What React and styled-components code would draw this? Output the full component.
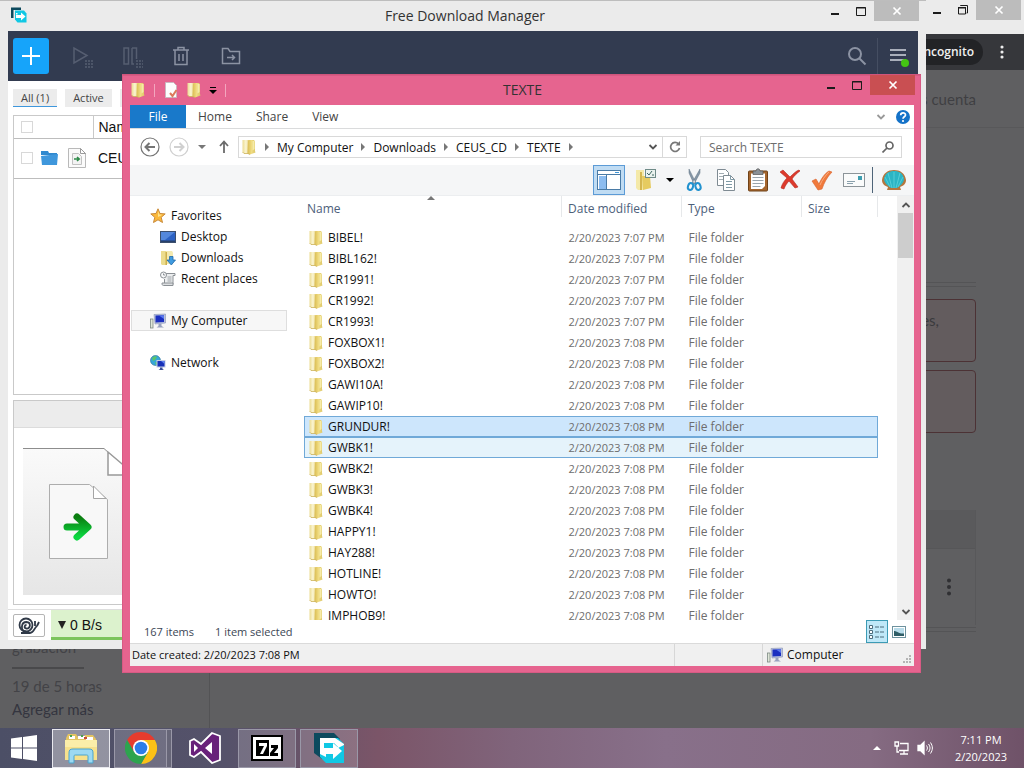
import React, { useState } from 'react';
import styled, { createGlobalStyle, css } from 'styled-components';

const GlobalStyle = createGlobalStyle`
  * {
    box-sizing: border-box;
  }

  body {
    margin: 0;
    overflow: hidden;
    font-family: "Open Sans", "Noto Sans", sans-serif;
    font-size: 12px;
    color: #111;
  }

  button,
  input {
    font: inherit;
    color: inherit;
    margin: 0;
    padding: 0;
    border: 0;
    background: none;
  }

  svg {
    display: block;
    flex: none;
  }
`;

const files = [
  ['BIBEL!', '2/20/2023 7:07 PM'],
  ['BIBL162!', '2/20/2023 7:07 PM'],
  ['CR1991!', '2/20/2023 7:07 PM'],
  ['CR1992!', '2/20/2023 7:07 PM'],
  ['CR1993!', '2/20/2023 7:07 PM'],
  ['FOXBOX1!', '2/20/2023 7:08 PM'],
  ['FOXBOX2!', '2/20/2023 7:08 PM'],
  ['GAWI10A!', '2/20/2023 7:08 PM'],
  ['GAWIP10!', '2/20/2023 7:08 PM'],
  ['GRUNDUR!', '2/20/2023 7:08 PM'],
  ['GWBK1!', '2/20/2023 7:08 PM'],
  ['GWBK2!', '2/20/2023 7:08 PM'],
  ['GWBK3!', '2/20/2023 7:08 PM'],
  ['GWBK4!', '2/20/2023 7:08 PM'],
  ['HAPPY1!', '2/20/2023 7:08 PM'],
  ['HAY288!', '2/20/2023 7:08 PM'],
  ['HOTLINE!', '2/20/2023 7:08 PM'],
  ['HOWTO!', '2/20/2023 7:08 PM'],
  ['IMPHOB9!', '2/20/2023 7:08 PM'],
];

/* ---------- icons ---------- */

const FolderIcon = () => (
  <svg width="16" height="16" viewBox="0 0 16 16">
    <defs>
      <linearGradient id="folderBack" x1="0" x2="1">
        <stop offset="0" stopColor="#ecdc92" />
        <stop offset=".5" stopColor="#fbf6d4" />
        <stop offset="1" stopColor="#dfc568" />
      </linearGradient>
      <linearGradient id="folderFront" x1="0" x2="1">
        <stop offset="0" stopColor="#d9bc52" />
        <stop offset=".5" stopColor="#f0dc82" />
        <stop offset="1" stopColor="#dcc668" />
      </linearGradient>
    </defs>
    <path d="M1.500 1h7v13.500H3L1.500 13z" fill="url(#folderBack)" />
    <path d="M7 2l1-1h5l1 1.500V12l.500 1.500L9 15.500 6.500 14.500z" fill="url(#folderFront)" />
    <path d="M11.500 2h2v8l-2 1.500z" fill="#f6eba8" />
    <path d="M1.500 13L3 14.500h4l2 1" fill="none" stroke="#cdb35a" strokeWidth=".8" />
  </svg>
);

const StarIcon = () => (
  <svg width="16" height="16" viewBox="0 0 16 16">
    <path d="M8 .8l2 4.7 5.2.4-4 3.4 1.3 5.2L8 11.8l-4.5 2.7 1.3-5.2-4-3.4L6 5.5z" fill="#fbb83a" stroke="#c98a3a" />
    <path d="M8 3l1.2 3.4 3.3.3L8 9z" fill="#ffe48c" />
  </svg>
);

const DesktopIcon = () => (
  <svg width="16" height="16" viewBox="0 0 16 16">
    <rect x=".5" y="2.500" width="15" height="11" fill="#2c62c4" stroke="#3c4f6e" />
    <path d="M1 3h14L5 11H1z" fill="#5488dc" />
    <path d="M1 11.500h14V13H1z" fill="#28406a" />
  </svg>
);

const DownloadsIcon = () => (
  <svg width="16" height="16" viewBox="0 0 16 16">
    <path d="M1 1h6v14H2l-1-1z" fill="#ecdc8d" />
    <path d="M6 1h6l1 1.500V14H7z" fill="#f4eab0" />
    <path d="M5.500 2v13H7V2z" fill="#cdb04c" />
    <path d="M9.500 6.500h3.500V10h2.500l-4.200 5L7 10h2.500z" fill="#3f9be0" stroke="#1f68a8" strokeWidth=".8" />
  </svg>
);

const RecentIcon = () => (
  <svg width="16" height="16" viewBox="0 0 16 16" fill="none" stroke="#8b9095">
    <path d="M6 2.500h9v2h-2v9H4.500V8" fill="#eceeef" />
    <path d="M2 12h11v2.500H3.500C2 14.500 2 13 2 12z" fill="#dcdfe1" />
    <path d="M7.500 6h4M7.500 8h4M7.500 10h4" stroke="#9da3a8" />
    <circle cx="3.500" cy="4" r="3" fill="#f7f8f9" />
    <path d="M3.500 2.500V4H5" />
  </svg>
);

const ComputerIcon = () => (
  <svg width="16" height="16" viewBox="0 0 16 16">
    <rect x=".5" y="6" width="2.500" height="9" fill="#dfe6d8" stroke="#7d8a84" strokeWidth=".8" />
    <path d="M4 1.500l11.500-.5v9L5 11z" fill="#b8c2dd" stroke="#8892b5" strokeWidth=".6" />
    <path d="M5.500 2.500l8.500-.300v6.800l-8.500.5z" fill="#1b2fc0" />
    <path d="M9 2.400l5-.2V6z" fill="#5a78ee" />
    <path d="M8.500 11h3v2l2.500 1.500H6.500L8.500 13z" fill="#98a2be" />
  </svg>
);

const NetworkIcon = () => (
  <svg width="16" height="16" viewBox="0 0 16 16">
    <circle cx="5.500" cy="5.500" r="5" fill="#36a8d8" stroke="#2a6c94" strokeWidth=".6" />
    <path d="M2 3c2-2 4-2 5-1L5 5 3 6zM5 7l3 1-2 2.300z" fill="#5cc46a" />
    <path d="M6.500 5h9v7.500h-9z" fill="#c3cce4" />
    <path d="M7.500 6h7v5.500h-7z" fill="#1730b8" />
    <path d="M11 6h3.500v3z" fill="#5f82f0" />
    <path d="M10 12.500h2.500V14l1.500 1H8.500l1.500-1z" fill="#3c4f98" />
  </svg>
);

const FdmLogo = ({ size = 16, square }) => (
  <svg width={size} height={size} viewBox="0 0 32 32">
    <path d={square ? 'M1 1h20l6 6-18 20-8-6z' : 'M0 1h20v5H5v16H0z'} fill="#0d4a5e" />
    <path d={square ? 'M7 6h18l6 6v19H13l-6-6z' : 'M8 7h18l5 6v18H13l-5-6z'} fill="#10c8e4" />
    <path d={square ? 'M7 6h15l9 6v1l-6 3H13v9l-6-3z' : 'M10 12h3v3h-3z'} fill="#fff" />
    {square && <path d="M11 11h10l4 4-4 1H11z" fill="#10c8e4" />}
    <path d="M10 16h10v-5l9 8-9 8v-5H10z" fill="#fff" />
  </svg>
);

const PageIcon = ({ size = 22 }) => (
  <svg width={size} height={size} viewBox="0 0 22 22">
    <path d="M2.500 1.500h12l5 5v14h-17z" fill="#fbfbfb" stroke="#b9b9b9" />
    <path d="M14.500 1.500v5h5z" fill="#fff" stroke="#9a9a9a" />
    <path d="M6.500 6.500h6l3 3v8h-9z" fill="#f3f3f3" stroke="#c2c2c2" />
    <path d="M8 12h5M11 10l2.200 2-2.200 2" fill="none" stroke="#2d8a48" strokeWidth="1.600" />
  </svg>
);

const PaneIcon = () => (
  <svg width="26" height="24" viewBox="0 0 26 24">
    <rect x="1.500" y="2.500" width="23" height="19" fill="#fff" stroke="#4a7ba6" />
    <path d="M2 6.500h22" stroke="#4a7ba6" />
    <path d="M3 8h7v13H3z" fill="#8dbdf0" />
    <path d="M10.500 7v15" stroke="#4a7ba6" />
    <path d="M19 4.500h4" stroke="#3f97d8" />
  </svg>
);

const FolderOptionsIcon = () => (
  <svg width="24" height="24" viewBox="0 0 24 24">
    <path d="M2 2h8v20H4l-2-2z" fill="#f4e9a8" />
    <path d="M8 8h8l1 12-8 2z" fill="#e6cb60" />
    <path d="M6 4h2v18H6z" fill="#d4b650" />
    <rect x="11.500" y="1.500" width="10" height="8" fill="#eaf2ee" stroke="#6f8b88" />
    <path d="M13 5l2 2 3-4" fill="none" stroke="#3c6660" />
    <path d="M18 7h2" stroke="#3c6660" />
  </svg>
);

const CutIcon = () => (
  <svg width="24" height="24" viewBox="0 0 24 24">
    <path d="M7 1l7 14-2 1L7 5zM18 1l-8 14 2 1 6-11z" fill="#8798a8" stroke="#5e7080" strokeWidth=".5" />
    <ellipse cx="8.500" cy="18.500" rx="2.500" ry="3.500" fill="none" stroke="#2292cf" strokeWidth="2" transform="rotate(20 8.500 18.500)" />
    <ellipse cx="16" cy="18.500" rx="2.500" ry="3.500" fill="none" stroke="#2292cf" strokeWidth="2" transform="rotate(-20 16 18.500)" />
  </svg>
);

const CopyIcon = () => (
  <svg width="24" height="24" viewBox="0 0 24 24" fill="#fff" stroke="#7f8b93">
    <path d="M3.500 1.500h8l3 3v13h-11z" />
    <path d="M5 5.500h5M5 8.500h5M5 11.500h5" stroke="#a3adb3" />
    <path d="M9.500 7.500h7l4 4v11h-11z" />
    <path d="M16.500 7.500v4h4M12 13.500h6M12 16.500h6M12 19.500h6" stroke="#7f9aa6" fill="none" />
  </svg>
);

const PasteIcon = () => (
  <svg width="24" height="24" viewBox="0 0 24 24">
    <rect x="2.500" y="3" width="19" height="20" rx="1" fill="#a5662e" stroke="#6f4218" />
    <path d="M5 5.500h14V18l-3 3H5z" fill="#fff" />
    <path d="M6.500 9.500h11M6.500 12.500h11M6.500 15.500h11M6.500 18.500h8" stroke="#9aa5ad" />
    <path d="M7 3h3c0-3 4-3 4 0h3v3.500H7z" fill="#8b9196" stroke="#555" strokeWidth=".7" />
  </svg>
);

const DeleteIcon = () => (
  <svg width="24" height="24" viewBox="0 0 24 24" fill="#dd3a2c" stroke="#b22a20" strokeWidth=".6">
    <path d="M2 4l3-2 7 7c3-3 6-6 9-7l1 1c-3 2-6 5-8 8l6 8-3 1-6-7c-2 2-4 5-5 8l-3-1c1-4 3-7 6-10z" />
  </svg>
);

const CheckIcon = () => (
  <svg width="24" height="24" viewBox="0 0 24 24">
    <path d="M2 13l4-2 3 5c2-5 6-11 10-13l3 1c-5 5-8 11-10 17l-4 1z" fill="#f07a3c" stroke="#d9622c" strokeWidth=".6" />
    <path d="M10 17c2-5 5-9 9-13" stroke="#f9ab7e" fill="none" />
  </svg>
);

const MailIcon = () => (
  <svg width="24" height="24" viewBox="0 0 24 24">
    <rect x="1.500" y="5.500" width="21" height="13" fill="#fafbfb" stroke="#8c9499" />
    <path d="M5 13.500h8M5 15.500h6" stroke="#8aa0ac" />
    <rect x="16" y="8" width="4" height="4" fill="#3c9eb0" />
  </svg>
);

const ShellIcon = () => (
  <svg width="26" height="24" viewBox="0 0 26 24">
    <path d="M1 12C2 5 7 2 13 2s11 3 12 10c0 4-3 6-6 7l1 3H6l1-3c-3-1-6-3-6-7z" fill="#b5763d" />
    <path d="M3 11C4 5 8 3 13 3s9 2 10 8c0 4-4 7-7 9h-6c-3-2-7-5-7-9z" fill="#2bb5c4" />
    <path d="M13 20V4M11 20L7 5M15 20l4-15M9 19L4 9M17 19l5-10" stroke="#5fd3dc" strokeWidth=".8" fill="none" />
  </svg>
);

const HelpIcon = () => (
  <svg width="14" height="14" viewBox="0 0 14 14">
    <circle cx="7" cy="7" r="7" fill="#1472c8" />
    <path d="M4.700 5.200c0-3.200 4.800-3 4.800-.3C9.500 6.700 7 6.800 7 8.700" fill="none" stroke="#fff" strokeWidth="1.700" />
    <circle cx="7" cy="11" r="1.100" fill="#fff" />
  </svg>
);

const ChevronDown = ({ color = '#555', size = 10, up }) => (
  <svg width={size} height={size} viewBox="0 0 10 10">
    <path d={up ? 'M1.500 7L5 3.500 8.500 7' : 'M1.500 3L5 6.500 8.500 3'} fill="none" stroke={color} strokeWidth="1.800" />
  </svg>
);

const Caret = ({ d = 'M0 2h8L4 6z', color = '#000' }) => (
  <svg width="8" height="8" viewBox="0 0 8 8">
    <path d={d} fill={color} />
  </svg>
);

const ArrowCircle = ({ right, color }) => (
  <svg width="20" height="20" viewBox="0 0 20 20" fill="none" stroke={color}>
    <circle cx="10" cy="10" r="9" strokeWidth="1.200" />
    <path d={right ? 'M5 10h9M10.500 6l4 4-4 4' : 'M15 10H6M9.500 6l-4 4 4 4'} strokeWidth="2" />
  </svg>
);

const PropertiesIcon = () => (
  <svg width="16" height="16" viewBox="0 0 16 16">
    <path d="M2.500.5h8l3 3v12h-11z" fill="#fdfdfd" stroke="#c9b9c0" />
    <path d="M7 11l2.500 3L13.500 8" fill="none" stroke="#dd7a5c" strokeWidth="2" />
  </svg>
);

/* ---------- shared window parts ---------- */

const Desktop = styled.div`
  position: relative;
  display: flex;
  flex-direction: column;
  height: 100vh;
  overflow: hidden;
  background: #5f5f61;
`;

const WindowControls = styled.div`
  display: flex;
  justify-content: flex-end;
  height: 20px;
`;

const ControlButton = styled.button`
  display: flex;
  align-items: center;
  justify-content: center;
  width: ${({ $close }) => ($close ? '45px' : '26px')};
  height: 20px;
  color: ${({ $close }) => ($close ? '#fff' : '#1b1b1b')};
  background: ${({ $close }) => $close || 'transparent'};
`;

const Controls = ({ closeColor, restore }) => (
  <WindowControls>
    <ControlButton aria-label="Minimize">
      <svg width="12" height="12" viewBox="0 0 12 12"><path d="M2 8h8v2H2z" fill="currentColor" /></svg>
    </ControlButton>
    <ControlButton aria-label="Maximize">
      <svg width="12" height="12" viewBox="0 0 12 12" fill="none" stroke="currentColor">
        {restore ? <path d="M1.500 4h7v6h-7zM1 3.500h8M3.500 2V1.500h7V9H9.500" /> : <path d="M1.500 3v7.500h9V2.500h-9zM1 3h10" />}
      </svg>
    </ControlButton>
    <ControlButton aria-label="Close" $close={closeColor}>
      <svg width="10" height="10" viewBox="0 0 10 10"><path d="M1.500 1.500l7 7M8.500 1.500l-7 7" stroke="currentColor" strokeWidth="1.700" /></svg>
    </ControlButton>
  </WindowControls>
);

const TitleBar = styled.header`
  display: grid;
  grid-template-columns: 1fr auto 1fr;
  flex: none;
  height: 31px;
`;

const Title = styled.h1`
  margin: 0;
  align-self: center;
  font-size: 14px;
  font-weight: 400;
  line-height: 20px;
  color: #333;
`;

/* ---------- browser in the back ---------- */

const Browser = styled.section`
  display: flex;
  flex: 1;
  flex-direction: column;
  min-height: 0;
`;

const BrowserTop = styled.div`
  display: flex;
  justify-content: flex-end;
  height: 34px;
  padding-right: 3px;
  background: #ebebeb;
`;

const BrowserToolbar = styled.div`
  display: flex;
  align-items: center;
  justify-content: flex-end;
  gap: 16px;
  height: 36px;
  padding-right: 19px;
  background: #36373b;
`;

const Pill = styled.span`
  padding: 0 9px 0 40px;
  border-radius: 13px;
  line-height: 26px;
  font-weight: 600;
  color: #f1f1f1;
  background: #222326;
`;

const PageHeader = styled.div`
  flex: none;
  height: 58px;
  padding-right: 48px;
  border-bottom: 1px solid #58585a;
  font: 15px/58px Lato, sans-serif;
  color: #3f3f43;
  text-align: right;
`;

const PageBody = styled.div`
  display: flex;
  flex: 1;
  min-height: 0;
`;

const PageSide = styled.aside`
  display: flex;
  flex-direction: column;
  justify-content: flex-end;
  width: 210px;
  padding: 0 12px 7px;
  border-right: 1px solid #535355;
  font: 15px/23px Lato, sans-serif;
  color: #434347;
`;

const Meter = styled.div`
  width: 72px;
  height: 2px;
  margin: 8px 0 6px;
  background: #49494b;
`;

const PageLink = styled.a`
  color: #34353f;
  text-decoration: none;
`;

const PageMain = styled.main`
  display: flex;
  flex: 1;
  flex-direction: column;
  padding: 154px 48px 0 20px;
`;

const Rules = styled.div`
  flex: none;
  height: 5px;
  border: solid #545456;
  border-width: 1px 0;
`;

const Alert = styled.div`
  flex: none;
  height: 63px;
  margin-top: ${({ $first }) => ($first ? '12px' : '8px')};
  padding: 8px 36px;
  border: 1px solid #4c3235;
  border-radius: 4px;
  font: 15px/24px Lato, sans-serif;
  color: #3a3a3d;
  text-align: right;
  background: #635c5e;
`;

const PageTable = styled.div`
  flex: none;
  height: 115px;
  margin: 77px 0 2px;
  padding-top: 38px;
  border-right: 1px solid #58585a;
  background: linear-gradient(#5a5a5c 38px, #5f5f61 38px);
`;

const PageRow = styled.div`
  display: flex;
  align-items: center;
  justify-content: flex-end;
  height: 77px;
  padding-right: 23px;
  border-top: 1px solid #565658;
`;

const Dots = ({ color, size }) => (
  <svg width="6" height={size} viewBox="0 0 6 18" fill={color}>
    <circle cx="3" cy="2.500" r="2" />
    <circle cx="3" cy="9" r="2" />
    <circle cx="3" cy="15.500" r="2" />
  </svg>
);

const BrowserWindow = () => (
  <Browser>
    <BrowserTop><Controls closeColor="#bcbcbc" restore /></BrowserTop>
    <BrowserToolbar>
      <Pill>Incognito</Pill>
      <Dots color="#eee" size={14} />
    </BrowserToolbar>
    <PageHeader>Tus cuenta</PageHeader>
    <PageBody>
      <PageSide>
        <span>grabación</span>
        <Meter />
        <span>19 de 5 horas</span>
        <PageLink href="#more">Agregar más</PageLink>
      </PageSide>
      <PageMain>
        <Rules />
        <Alert $first>es,</Alert>
        <Alert />
        <PageTable>
          <PageRow><Dots color="#303033" size={18} /></PageRow>
        </PageTable>
        <Rules />
      </PageMain>
    </PageBody>
  </Browser>
);

/* ---------- download manager ---------- */

const Fdm = styled.section`
  position: absolute;
  inset: 0 98px 119px 0;
  display: flex;
  flex-direction: column;
  padding: 0 8px 9px;
  border-top: 1px solid #bdbdbd;
  background: #ebebeb;
`;

const FdmTitle = styled(TitleBar)`
  height: 30px;
  padding-left: 3px;
  margin-right: -1px;
`;

const LogoSlot = styled.span`
  padding-top: 6px;
`;

const FdmToolbar = styled.div`
  display: flex;
  align-items: center;
  flex: none;
  gap: 14px;
  height: 50px;
  padding-left: 5px;
  color: #8c93a3;
  background: #323b50;
`;

const ToolButton = styled.button`
  display: flex;
  align-items: center;
  justify-content: center;
  width: 36px;
  height: 36px;
  opacity: ${({ $dim }) => ($dim ? 0.4 : 1)};
  ${({ $primary }) => $primary && css`
    border-radius: 3px;
    color: #fff;
    background: #16a4fa;
  `}
`;

const MenuSide = styled.div`
  display: flex;
  gap: 2px;
  margin-left: auto;
`;

const MenuButton = styled(ToolButton)`
  width: 41px;
  border-left: 1px solid #454e62;
`;

const FdmBody = styled.div`
  display: flex;
  flex: 1;
  flex-direction: column;
  min-height: 0;
  background: #fff;
`;

const Filters = styled.div`
  display: flex;
  flex: none;
  gap: 8px;
  padding: 8px 5px;
`;

const Filter = styled.button`
  height: 18px;
  padding: 0 8px;
  font-size: 11px;
  line-height: 17px;
  color: #444;
  background: #ececec;
  border-bottom: 1px solid ${({ $active }) => ($active ? '#3f97dc' : '#ececec')};
`;

const Downloads = styled.div`
  flex: 1;
  margin: 0 5px;
  border: 1px solid #c9c9c9;
`;

const DownloadTable = styled.table`
  width: 100%;
  border-collapse: collapse;
  table-layout: fixed;
  font: 14px "Liberation Sans", Arial, sans-serif;

  th,
  td {
    padding: 0 0 0 5px;
    border-bottom: 1px solid #bdbdbd;
    font-weight: 400;
    text-align: left;
  }

  th {
    height: 22px;
  }

  th + th {
    border-left: 1px solid #c9c9c9;
  }

  td {
    height: 40px;
  }
`;

const CheckCol = styled.col`
  width: 79px;
`;

const CellIcons = styled.div`
  display: flex;
  align-items: center;
  gap: 8px;
  padding-left: 2px;
`;

const Tick = styled.input`
  appearance: none;
  display: block;
  width: 12px;
  height: 12px;
  border: 1px solid #d8d8d8;
  background: #fff;
`;

const Details = styled.div`
  flex: none;
  height: 205px;
  margin: 5px 5px 4px;
  border: 1px solid #c9c9c9;
`;

const DetailsHead = styled.div`
  height: 27px;
  border-bottom: 1px solid #dcdcdc;
  background: #ececec;
`;

const Preview = styled.div`
  padding: 20px 9px;
`;

const FdmStatus = styled.div`
  display: flex;
  flex: none;
  height: 31px;
  border-top: 1px solid #dedede;
`;

const SnailButton = styled.button`
  display: flex;
  align-items: center;
  justify-content: center;
  width: 32px;
  height: 23px;
  margin: 4px 6px 0 5px;
  border: 1px solid #b5b5b5;
  border-radius: 2px;
`;

const Speed = styled.div`
  display: flex;
  align-items: center;
  gap: 4px;
  width: 120px;
  padding: 3px 0 0 7px;
  border-bottom: 3px solid #7cc45c;
  font: 14px "Liberation Sans", Arial, sans-serif;
  background: #dcf2cd;
`;

const DownloadManager = () => (
  <Fdm>
    <FdmTitle>
      <LogoSlot><FdmLogo /></LogoSlot>
      <Title>Free Download Manager</Title>
      <Controls closeColor="#bcbcbc" />
    </FdmTitle>
    <FdmToolbar>
      <ToolButton $primary aria-label="Add download">
        <svg width="20" height="20" viewBox="0 0 20 20"><path d="M10 1v18M1 10h18" stroke="currentColor" strokeWidth="2" /></svg>
      </ToolButton>
      <ToolButton $dim aria-label="Start">
        <svg width="24" height="24" viewBox="0 0 24 24" fill="none" stroke="currentColor" strokeWidth="1.500">
          <path d="M5 4v15l13-7.500z" />
          <path d="M16 17h8M16 20h8M16 23h8" strokeDasharray="2 1" />
        </svg>
      </ToolButton>
      <ToolButton $dim aria-label="Pause">
        <svg width="24" height="24" viewBox="0 0 24 24" fill="none" stroke="currentColor" strokeWidth="1.500">
          <path d="M5 4h4.500v16H5zM13 4h4.500v11M13 4v16h2" />
          <path d="M17 17h7M17 20h7M17 23h7" strokeDasharray="2 1" />
        </svg>
      </ToolButton>
      <ToolButton aria-label="Delete">
        <svg width="20" height="20" viewBox="0 0 20 20" fill="none" stroke="currentColor" strokeWidth="1.500">
          <path d="M2 4h16M7 4V1.500h6V4M4 4v14.500h12V4M8 8v7M12 8v7" />
        </svg>
      </ToolButton>
      <ToolButton aria-label="Move">
        <svg width="20" height="20" viewBox="0 0 20 20" fill="none" stroke="currentColor" strokeWidth="1.500">
          <path d="M1.500 17.500v-15H7l2 3h9.500v12zM6 11.500h7M11 9l2.500 2.500L11 14" />
        </svg>
      </ToolButton>
      <MenuSide>
        <ToolButton aria-label="Search">
          <svg width="20" height="20" viewBox="0 0 20 20" fill="none" stroke="currentColor" strokeWidth="2">
            <circle cx="8" cy="8" r="6" />
            <path d="M12.500 12.500l6 6" />
          </svg>
        </ToolButton>
        <MenuButton aria-label="Menu">
          <svg width="22" height="22" viewBox="0 0 22 22">
            <path d="M3 5h16M3 10h16M3 15h16" stroke="#a9afbb" strokeWidth="2" />
            <circle cx="18" cy="18" r="4" fill="#44c413" />
          </svg>
        </MenuButton>
      </MenuSide>
    </FdmToolbar>
    <FdmBody>
      <Filters>
        <Filter $active>All (1)</Filter>
        <Filter>Active</Filter>
        <Filter>Completed</Filter>
      </Filters>
      <Downloads>
        <DownloadTable>
          <colgroup><CheckCol /><col /></colgroup>
          <thead>
            <tr>
              <th><CellIcons><Tick type="checkbox" aria-label="Select all" /></CellIcons></th>
              <th>Name</th>
            </tr>
          </thead>
          <tbody>
            <tr>
              <td>
                <CellIcons>
                  <Tick type="checkbox" aria-label="Select CEUS_CD" />
                  <svg width="17" height="16" viewBox="0 0 17 16">
                    <path d="M0 1h7l1 2h8v2H0z" fill="#3089cf" />
                    <path d="M0 6l17-2-1 11H1z" fill="#3f97dc" />
                  </svg>
                  <PageIcon />
                </CellIcons>
              </td>
              <td>CEUS_CD</td>
            </tr>
          </tbody>
        </DownloadTable>
      </Downloads>
      <Details>
        <DetailsHead />
        <Preview>
          <svg width="116" height="147" viewBox="0 0 116 147">
            <defs>
              <linearGradient id="paper" x1="0" y1="0" x2="0" y2="1">
                <stop offset="0" stopColor="#fafafa" />
                <stop offset="1" stopColor="#e6e6e6" />
              </linearGradient>
              <linearGradient id="arrow" x1="0" y1="0" x2="0" y2="1">
                <stop offset="0" stopColor="#0b7d10" />
                <stop offset="1" stopColor="#0bd840" />
              </linearGradient>
            </defs>
            <path d="M0 .5h81l35 32V147H0z" fill="url(#paper)" />
            <path d="M0 .5h81l35 32" fill="none" stroke="#8d8d8d" />
            <path d="M85 4v23h27z" fill="#fff" stroke="#999" strokeWidth="1.500" />
            <path d="M26.500 36.500h40l18 15v59h-58z" fill="#f8f8f8" stroke="#adadad" />
            <path d="M70.500 38v12.500H83z" fill="#fff" stroke="#a5a5a5" />
            <path d="M44 79h20M54 69l11 10-11 10" fill="none" stroke="url(#arrow)" strokeWidth="7" strokeLinecap="round" strokeLinejoin="round" />
          </svg>
        </Preview>
      </Details>
      <FdmStatus>
        <SnailButton aria-label="Snail mode">
          <svg width="22" height="18" viewBox="0 0 22 18" fill="none" stroke="#2f3947" strokeWidth="1.800">
            <circle cx="8" cy="8" r="6.500" />
            <path d="M8 14.500C2 14 3 5 8.500 5c5 .5 4 7 0 6.500-3-.5-2-3.500 0-3.500" />
            <path d="M3 16h9c4 0 4-5 7-7M17 9V4M19 9l2-4" />
          </svg>
        </SnailButton>
        <Speed>
          <Caret d="M0 0h8L4 8z" color="#222" />
          0 B/s
        </Speed>
      </FdmStatus>
    </FdmBody>
  </Fdm>
);

/* ---------- explorer ---------- */

const ExplorerFrame = styled.section`
  position: absolute;
  inset: 74px 103px 95px 122px;
  display: flex;
  flex-direction: column;
  padding: 0 7px 7px 8px;
  border: solid #cf557c;
  border-width: 1px 0 0;
  background: #e6648f;
  box-shadow: inset 0 0 0 1px #d85a84;
`;

const ExplorerTitle = styled(TitleBar)`
  height: 30px;
  margin-right: -1px;
`;

const QuickAccess = styled.div`
  display: flex;
  align-items: center;
  gap: 7px;
`;

const QuickLine = styled.span`
  width: 1px;
  height: 13px;
  margin: 0 1px;
  background: #f3a6be;
`;

const Inner = styled.div`
  display: flex;
  flex: 1;
  flex-direction: column;
  min-height: 0;
  background: #fff;
`;

const Ribbon = styled.nav`
  display: flex;
  align-items: center;
  flex: none;
  height: 24px;
  border-bottom: 1px solid #dadbdc;
`;

const RibbonTab = styled.button`
  height: 23px;
  padding: 0 12px;
  line-height: 23px;
  color: ${({ $file }) => ($file ? '#fff' : '#444')};
  background: ${({ $file }) => ($file ? '#1979ca' : 'none')};
  ${({ $file }) => $file && 'width: 56px;'}
`;

const RibbonEnd = styled.div`
  display: flex;
  align-items: center;
  gap: 10px;
  margin-left: auto;
  padding-right: 4px;
`;

const IconButton = styled.button`
  display: flex;
  align-items: center;
  justify-content: center;
`;

const NavRow = styled.div`
  display: flex;
  align-items: center;
  flex: none;
  gap: 9px;
  height: 36px;
  padding: 0 12px 0 10px;
`;

const Address = styled.div`
  display: flex;
  align-items: center;
  flex: 1;
  gap: 6px;
  height: 22px;
  margin-left: -4px;
  padding-left: 2px;
  border: 1px solid #d9d9d9;
`;

const Refresh = styled(IconButton)`
  width: 24px;
  height: 20px;
  border-left: 1px solid #d9d9d9;
`;

const AddressEnd = styled.div`
  display: flex;
  align-items: center;
  gap: 4px;
  margin-left: auto;
`;

const SearchBox = styled.label`
  display: flex;
  align-items: center;
  width: 202px;
  height: 22px;
  margin-left: 4px;
  padding: 0 7px 0 8px;
  border: 1px solid #d9d9d9;
`;

const SearchInput = styled.input`
  flex: 1;
  min-width: 0;
  outline: 0;

  &::placeholder {
    color: #6d6d6d;
    opacity: 1;
  }
`;

const Commands = styled.div`
  display: flex;
  align-items: flex-end;
  justify-content: flex-end;
  flex: none;
  height: 31px;
  padding-right: 4px;
  background: #f5f6f7;
  border-bottom: 1px solid #eceef0;
`;

const Command = styled(IconButton)`
  width: ${({ $narrow }) => ($narrow ? '16px' : '32px')};
  height: 30px;
  ${({ $pressed }) => $pressed && css`
    margin-right: 5px;
    border: 1px solid #5c9bd6;
    background: #c0dcf3;
  `}
`;

const CommandLine = styled.span`
  width: 1px;
  height: 26px;
  margin: 2px 5px 2px 2px;
  background: #4e6478;
`;

const Content = styled.div`
  display: flex;
  flex: 1;
  min-height: 0;
`;

const Tree = styled.nav`
  display: flex;
  flex-direction: column;
  flex: none;
  width: 174px;
  padding: 9px 17px 0 1px;
`;

const TreeItem = styled.a`
  display: flex;
  align-items: center;
  gap: 5px;
  height: 21px;
  margin-bottom: ${({ $last }) => ($last ? '21px' : '0')};
  padding-left: ${({ $child }) => ($child ? '28px' : '18px')};
  border: 1px solid ${({ $selected }) => ($selected ? '#dedede' : 'transparent')};
  color: #111;
  text-decoration: none;
  background: ${({ $selected }) => ($selected ? '#f7f7f7' : 'none')};
`;

const ListPane = styled.div`
  flex: 1;
  min-width: 0;
  padding-right: 19px;
  overflow: hidden;
`;

const FileTable = styled.table`
  width: 100%;
  border-collapse: collapse;
  table-layout: fixed;
  color: #6d6d6d;
`;

const Col = styled.col`
  width: ${({ $width }) => $width || 'auto'};
`;

const HeadCell = styled.th`
  height: 21px;
  padding: 5px 0 0 ${({ $first }) => ($first ? '3px' : '6px')};
  border-right: 1px solid #e6e8ea;
  font-weight: 400;
  line-height: 16px;
  color: #4c607a;
  text-align: left;
`;

const SortMark = styled.span`
  float: right;
  margin: -7px 126px 0 0;
`;

const Spacer = styled.tr`
  height: 10px;
`;

const FileRow = styled.tr`
  height: 21px;
  background: ${({ $state }) => ({ selected: '#cde6fc', hover: '#e5f3fb' })[$state] || 'none'};
  outline: ${({ $state }) => ($state ? '1px solid #70a9d8' : 'none')};
  outline-offset: -1px;

  td {
    padding: 0 0 0 7px;
    line-height: 16px;
    white-space: nowrap;
  }

  td:first-child {
    padding-left: 4px;
  }
`;

const DateCell = styled.td`
  font-size: 11px;
`;

const FileName = styled.div`
  display: flex;
  align-items: center;
  gap: 4px;
  color: #111;
`;

const ScrollBar = styled.div`
  display: flex;
  flex-direction: column;
  flex: none;
  width: 17px;
  background: #f0f0f0;
`;

const ScrollButton = styled(IconButton)`
  height: 17px;
`;

const Thumb = styled.div`
  height: 45px;
  margin: 0 1px;
  background: #cdcdcd;
`;

const Track = styled.div`
  flex: 1;
`;

const Summary = styled.div`
  display: flex;
  align-items: center;
  flex: none;
  gap: 21px;
  height: 23px;
  padding: 0 4px 0 14px;
  font-size: 11px;
  color: #3c4654;
`;

const Views = styled.div`
  display: flex;
  align-items: center;
  margin-left: auto;
`;

const ViewButton = styled(IconButton)`
  width: 22px;
  height: 23px;
  border: 1px solid ${({ $on }) => ($on ? '#3c9bb5' : 'transparent')};
  background: ${({ $on }) => ($on ? '#bfe8f8' : 'none')};
`;

const StatusBar = styled.footer`
  display: flex;
  flex: none;
  height: 23px;
  border-top: 1px solid #dadada;
  line-height: 22px;
  background: #f0f0f0;
`;

const StatusCell = styled.div`
  display: flex;
  align-items: center;
  gap: 4px;
  flex: ${({ $width }) => ($width ? `0 0 ${$width}` : '1')};
  padding-left: ${({ $zone }) => ($zone ? '4px' : '1px')};
  border-left: 1px solid ${({ $width }) => ($width ? '#d7d7d7' : 'transparent')};
  font-size: ${({ $zone }) => ($zone ? '12px' : '11px')};
`;

const Grip = styled.span`
  align-self: flex-end;
  margin: 0 2px 2px auto;
`;

const commands = [
  ['Cut', CutIcon],
  ['Copy', CopyIcon],
  ['Paste', PasteIcon],
  ['Delete', DeleteIcon],
  ['Properties', CheckIcon],
  ['E-mail', MailIcon],
];

const places = [
  { label: 'Favorites', icon: StarIcon },
  { label: 'Desktop', icon: DesktopIcon, child: true },
  { label: 'Downloads', icon: DownloadsIcon, child: true },
  { label: 'Recent places', icon: RecentIcon, child: true, last: true },
  { label: 'My Computer', icon: ComputerIcon, last: true, selected: true },
  { label: 'Network', icon: NetworkIcon },
];

const Explorer = () => {
  const [selected, setSelected] = useState('GRUNDUR!');
  const [hovered, setHovered] = useState('GWBK1!');
  const rowState = (name) => {
    if (name === selected) return 'selected';
    return name === hovered ? 'hover' : '';
  };

  return (
    <ExplorerFrame>
      <ExplorerTitle>
        <QuickAccess>
          <FolderIcon />
          <QuickLine />
          <PropertiesIcon />
          <FolderIcon />
          <Caret d="M1 1h6v1H1zM0 4h8L4 8z" />
          <QuickLine />
        </QuickAccess>
        <Title>TEXTE</Title>
        <Controls closeColor="#c94f52" />
      </ExplorerTitle>
      <Inner>
        <Ribbon>
          <RibbonTab $file>File</RibbonTab>
          <RibbonTab>Home</RibbonTab>
          <RibbonTab>Share</RibbonTab>
          <RibbonTab>View</RibbonTab>
          <RibbonEnd>
            <IconButton aria-label="Expand the ribbon"><ChevronDown color="#999" /></IconButton>
            <IconButton aria-label="Help"><HelpIcon /></IconButton>
          </RibbonEnd>
        </Ribbon>
        <NavRow>
          <IconButton aria-label="Back"><ArrowCircle color="#757575" /></IconButton>
          <IconButton aria-label="Forward"><ArrowCircle right color="#d0d0d0" /></IconButton>
          <IconButton aria-label="Recent locations"><Caret color="#777" /></IconButton>
          <IconButton aria-label="Up">
            <svg width="18" height="14" viewBox="0 0 18 14"><path d="M9 13V2M5 6l4-4.500L13 6" fill="none" stroke="#6b6b6b" strokeWidth="1.800" /></svg>
          </IconButton>
          <Address>
            <FolderIcon />
            {['My Computer', 'Downloads', 'CEUS_CD', 'TEXTE'].map((crumb) => (
              <React.Fragment key={crumb}>
                <Caret d="M2 0l4 4-4 4z" color="#777" />
                <button>{crumb}</button>
              </React.Fragment>
            ))}
            <Caret d="M2 0l4 4-4 4z" color="#777" />
            <AddressEnd>
              <IconButton aria-label="Previous locations"><ChevronDown /></IconButton>
              <Refresh aria-label="Refresh">
                <svg width="12" height="12" viewBox="0 0 12 12">
                  <path d="M9.500 3A4.500 4.500 0 1 0 10.500 7" fill="none" stroke="#777" strokeWidth="1.700" />
                  <path d="M6.500 4.500h4.500V0z" fill="#777" />
                </svg>
              </Refresh>
            </AddressEnd>
          </Address>
          <SearchBox>
            <SearchInput placeholder="Search TEXTE" aria-label="Search TEXTE" />
            <svg width="12" height="12" viewBox="0 0 12 12" fill="none" stroke="#666" strokeWidth="1.700">
              <circle cx="7.500" cy="4.500" r="3.500" />
              <path d="M5 7l-4.500 4.500" />
            </svg>
          </SearchBox>
        </NavRow>
        <Commands>
          <Command $pressed aria-label="Navigation pane"><PaneIcon /></Command>
          <Command aria-label="Folder options"><FolderOptionsIcon /></Command>
          <Command $narrow aria-label="More options"><Caret /></Command>
          {commands.map(([label, Icon]) => (
            <Command key={label} aria-label={label}><Icon /></Command>
          ))}
          <CommandLine />
          <Command aria-label="Classic Shell"><ShellIcon /></Command>
        </Commands>
        <Content>
          <Tree>
            {places.map(({ label, icon: Icon, child, last, selected: on }) => (
              <TreeItem key={label} href="#place" $child={child} $last={last} $selected={on}>
                <Icon />
                {label}
              </TreeItem>
            ))}
          </Tree>
          <ListPane>
            <FileTable>
              <colgroup>
                <Col />
                <Col $width="120px" />
                <Col $width="120px" />
                <Col $width="76px" />
              </colgroup>
              <thead>
                <tr>
                  <HeadCell $first>
                    Name
                    <SortMark><Caret d="M0 6l4-4 4 4z" color="#777" /></SortMark>
                  </HeadCell>
                  <HeadCell>Date modified</HeadCell>
                  <HeadCell>Type</HeadCell>
                  <HeadCell>Size</HeadCell>
                </tr>
              </thead>
              <tbody>
                <Spacer><td colSpan="4" /></Spacer>
                {files.map(([name, date]) => (
                  <FileRow
                    key={name}
                    $state={rowState(name)}
                    onClick={() => setSelected(name)}
                    onMouseEnter={() => setHovered(name)}
                  >
                    <td><FileName><FolderIcon />{name}</FileName></td>
                    <DateCell>{date}</DateCell>
                    <td>File folder</td>
                    <td />
                  </FileRow>
                ))}
              </tbody>
            </FileTable>
          </ListPane>
          <ScrollBar>
            <ScrollButton aria-label="Scroll up"><ChevronDown up /></ScrollButton>
            <Thumb />
            <Track />
            <ScrollButton aria-label="Scroll down"><ChevronDown /></ScrollButton>
          </ScrollBar>
        </Content>
        <Summary>
          <span>167 items</span>
          <span>1 item selected</span>
          <Views>
            <ViewButton $on aria-label="Details view">
              <svg width="16" height="14" viewBox="0 0 16 14" fill="none" stroke="#4d6c7c">
                <path d="M.5.500h3v3h-3zM.5 5.500h3v3h-3zM.5 10.500h3v3h-3z" fill="#fff" />
                <path d="M6 2h4M11 2h4M6 7h4M11 7h4M6 12h4M11 12h4" />
              </svg>
            </ViewButton>
            <ViewButton aria-label="Large icons view">
              <svg width="14" height="12" viewBox="0 0 14 12">
                <rect x=".5" y=".5" width="13" height="11" fill="#fff" stroke="#6e929e" />
                <path d="M2 2h10v8H2z" fill="#b9dcea" />
                <path d="M2 5c3 0 5 3 10 2.500V10H2z" fill="#2f5d66" />
              </svg>
            </ViewButton>
          </Views>
        </Summary>
        <StatusBar>
          <StatusCell>Date created: 2/20/2023 7:08 PM</StatusCell>
          <StatusCell $width="88px" />
          <StatusCell $width="152px" $zone>
            <ComputerIcon />
            Computer
            <Grip>
              <svg width="9" height="9" viewBox="0 0 9 9" fill="#b4b4b4">
                <path d="M6 0h2v2H6zM3 3h2v2H3zM6 3h2v2H6zM0 6h2v2H0zM3 6h2v2H3zM6 6h2v2H6z" />
              </svg>
            </Grip>
          </StatusCell>
        </StatusBar>
      </Inner>
    </ExplorerFrame>
  );
};

/* ---------- taskbar ---------- */

const Bar = styled.footer`
  display: flex;
  align-items: center;
  flex: none;
  height: 40px;
  color: #fff;
  background: linear-gradient(90deg, #4c4f66 0%, #55526a 22%, #7b5568 37%, #80647b 50%, #88708a 65%, #856b82 85%, #6f5268 100%);
`;

const TaskButton = styled.button`
  display: flex;
  align-items: center;
  justify-content: center;
  width: 58px;
  height: 39px;
  margin-right: 4px;
  border: 1px solid transparent;
  ${({ $open }) => $open && css`
    border-color: #9a98a8;
    background: rgba(255, 255, 255, 0.17);
  `}
  ${({ $active }) => $active && css`
    border-color: #e8e8ee;
    background: rgba(255, 255, 255, 0.38);
  `}
  ${({ $stacked }) => $stacked && css`
    padding-right: 5px;
    box-shadow: inset -4px 0 0 #676678, inset -5px 0 0 #9a98a8;
  `}
`;

const StartButton = styled(TaskButton)`
  width: 48px;
`;

const Tray = styled.div`
  display: flex;
  align-items: center;
  gap: 12px;
  margin-left: auto;
  padding-right: 7px;
`;

const Clock = styled.time`
  width: 72px;
  font-size: 11px;
  line-height: 17px;
  text-align: center;
`;

const Taskbar = () => (
  <Bar>
    <StartButton aria-label="Start">
      <svg width="26" height="26" viewBox="0 0 26 26" fill="#fff">
        <path d="M0 3.500L11 2v10.500H0zM12 1.900L26 0v12.500H12zM0 13.500h11V24L0 22.500zM12 13.500h14V26l-14-1.900z" />
      </svg>
    </StartButton>
    <TaskButton $open $active aria-label="File Explorer">
      <svg width="34" height="32" viewBox="0 0 34 32">
        <path d="M2 6l2-4h8l2 3h5l2-2h8l3 4v19H2z" fill="#e3c362" />
        <path d="M5 4h6v3H5zM14 4h7v3h-7zM22 5h7v3h-7z" fill="#fff" />
        <path d="M6 3h2v2H6zM17 3h2v2h-2z" fill="#4aa34e" />
        <path d="M20 5h3v2h-3z" fill="#c84a38" />
        <path d="M1 8h32v20H1z" fill="#f6e18c" />
        <path d="M1 8h32v7H1z" fill="#fbeea9" />
        <path d="M5 31V21c0-3 1-4 4-4h16c3 0 4 1 4 4v10h-5v-7c0-1-1-1-2-1H12c-1 0-2 0-2 1v7z" fill="#9cd9f2" stroke="#4ba4cd" />
      </svg>
    </TaskButton>
    <TaskButton $open $stacked aria-label="Chrome">
      <svg width="32" height="32" viewBox="0 0 32 32">
        <path d="M2.140 8A16 16 0 0 1 29.860 8H16L9.070 20z" fill="#e63c2e" />
        <path d="M29.860 8A16 16 0 0 1 16 32l6.930-12L16 8z" fill="#fbc116" />
        <path d="M2.140 8A16 16 0 0 0 16 32l6.930-12H9.070z" fill="#2da44e" />
        <circle cx="16" cy="16" r="8" fill="#fff" />
        <circle cx="16" cy="16" r="6.300" fill="#2b7de9" />
      </svg>
    </TaskButton>
    <TaskButton aria-label="Visual Studio">
      <svg width="34" height="32" viewBox="0 0 34 32">
        <path d="M24 1l8 3v24l-8 3-11-11-7 5-4-2V9l4-2 7 5z" fill="#68217a" stroke="#fff" strokeWidth="1.800" />
        <path d="M24 10v12l-7-6zM6 12l4 4-4 4z" fill="#fff" />
      </svg>
    </TaskButton>
    <TaskButton $open aria-label="7-Zip">
      <svg width="32" height="26" viewBox="0 0 32 26">
        <path d="M1 1h30v24H1z" fill="#fff" stroke="#000" strokeWidth="2" />
        <path d="M5 5h13v16H5z" fill="#000" />
        <path d="M8 8h8v3l-4 8H9l4-8H8z" fill="#fff" />
        <path d="M20 10h7v3l-4 5h4v3h-8v-3l4-5h-3z" fill="#000" />
      </svg>
    </TaskButton>
    <TaskButton $open aria-label="Free Download Manager"><FdmLogo size={32} square /></TaskButton>
    <Tray>
      <IconButton aria-label="Show hidden icons"><Caret d="M0 6l4-4 4 4z" color="#fff" /></IconButton>
      <svg width="40" height="16" viewBox="0 0 40 16" fill="none" stroke="#fff" strokeWidth="1.300">
        <path d="M7 3.500h8v7H6M11 10.500v3M7 14h8M2 2h3.500v4H2zM4 6v6h2" />
        <path d="M25 5.500h2.500L31 2v12l-3.500-3.500H25z" fill="#fff" />
        <path d="M33.500 5.500c1.200 2 1.200 3 0 5M35.500 4c2 3 2 5 0 8M37.500 2.500c2.500 4 2.500 7 0 11" strokeWidth="1" />
      </svg>
      <Clock>7:11 PM<br />2/20/2023</Clock>
    </Tray>
  </Bar>
);

const App = () => (
  <>
    <GlobalStyle />
    <Desktop>
      <BrowserWindow />
      <DownloadManager />
      <Explorer />
      <Taskbar />
    </Desktop>
  </>
);

export default App;
